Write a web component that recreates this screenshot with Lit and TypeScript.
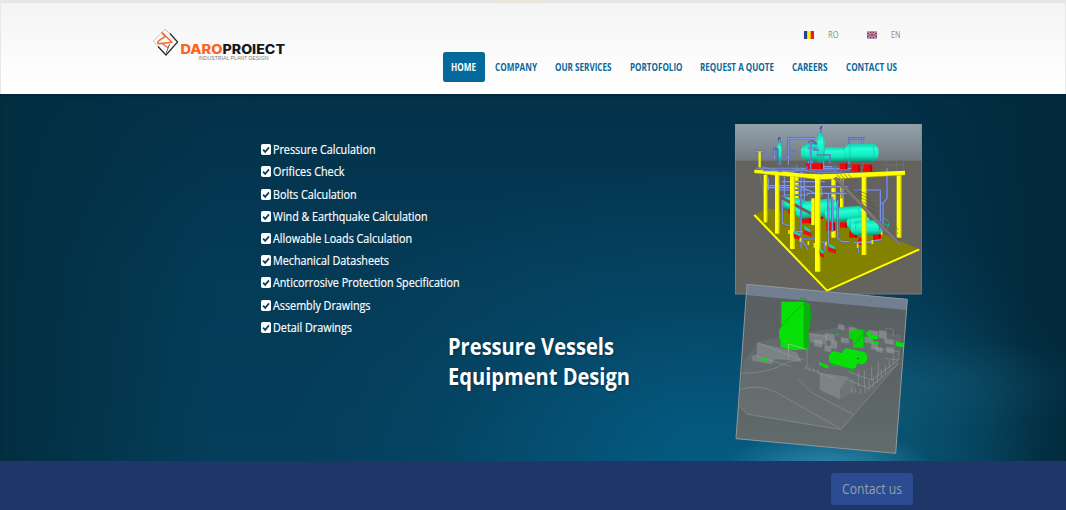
import { LitElement, html, svg, css } from "lit";
import { customElement, property, state } from "lit/decorators.js";
import { styleMap } from "lit/directives/style-map.js";

/** One line of text condensed or expanded horizontally to a given width. */
@customElement("fit-text")
class FitText extends LitElement {
  @property() text = "";
  @property({ type: Number }) width = 0;
  @state() private ratio = 1;

  static styles = css`
    :host { display: block; }
    .box { display: block; overflow: visible; white-space: nowrap; }
    .line { display: inline-block; transform-origin: 0 50%; }
  `;

  firstUpdated() {
    const line = this.renderRoot.querySelector(".line") as HTMLElement;
    if (line.offsetWidth) this.ratio = this.width / line.getBoundingClientRect().width;
  }

  render() {
    return html`<span class="box" style=${styleMap({ width: `${this.width}px` })}
      ><span class="line" style=${styleMap({ transform: `scaleX(${this.ratio})` })}>${this.text}</span></span
    >`;
  }
}

type Pt = [number, number];

const NAV: [string, number, number][] = [
  ["COMPANY", 42, 18], ["OUR SERVICES", 56.5, 18], ["PORTOFOLIO", 52.5, 18],
  ["REQUEST A QUOTE", 74, 18], ["CAREERS", 35.5, 18], ["CONTACT US", 51, 0],
];

const SERVICES: [string, number][] = [
  ["Pressure Calculation", 102.5], ["Orifices Check", 71.5], ["Bolts Calculation", 83.5],
  ["Wind & Earthquake Calculation", 154.5], ["Allowable Loads Calculation", 139],
  ["Mechanical Datasheets", 116], ["Anticorrosive Protection Specification", 186.5],
  ["Assembly Drawings", 97.5], ["Detail Drawings", 79],
];

const PIPES = [
  "M92 110H116L122 126H200M95 160H380M110 165H330M190 150V70H270M250 160V95M262 170V90L290 82",
  "M148 130V95M165 150V70M163 85V66M372 148V70H420M412 70V86",
  "M118 180L128 218H200M130 190V225M130 212H220L270 235M178 185V245M215 215H340M228 185V400M238 190V260",
  "M245 235H365M160 225H250M310 235V390M322 245V350M338 255V370L350 380H372",
  "M172 240V325L215 340M228 372H275L300 385V410M230 375L250 405M388 225H466V345",
  "M486 160V250L474 264V350M474 264H466M400 395V415M385 382H440M205 330V350H232",
  "M115 170H210M205 160L240 178H330M350 190V250M290 245V215H370",
  "M430 380L470 374M296 130V165M268 155H322M190 108H212M100 160L160 176M180 240H250M170 200H300",
];

const PLANT_BOXES: Pt[] = [
  [340, 132], [372, 140], [300, 160], [318, 180], [348, 172], [416, 170], [440, 186],
  [462, 150], [478, 176], [300, 195], [268, 178], [430, 150], [455, 200], [484, 200],
];

@customElement("app-root")
class AppRoot extends LitElement {
  static styles = css`
    :host {
      display: flex; flex-direction: column; width: 1066px; height: 510px; overflow: hidden;
      font-family: "Open Sans", "Noto Sans", sans-serif;
    }
    .header {
      box-sizing: border-box; height: 94px; flex: none; display: flex; justify-content: space-between;
      padding: 0 168.5px 0 150px; background: linear-gradient(#f4f4f4, #ffffff 90%);
      border-top: 3px solid #e7e6e6; border-left: 1px solid #e6e8e9; border-right: 1px solid #e6e8e9;
    }
    .marker { position: absolute; left: 495px; top: 0; width: 51px; height: 2px; background: #efe5d8; }
    .logo { width: 140px; height: 40px; margin-top: 22px; display: block; }
    .side { display: flex; flex-direction: column; align-items: flex-end; }
    .langs { display: flex; align-items: center; height: 14px; margin-top: 25px; font-size: 9px; line-height: 14px; color: #8b8b8b; }
    .flag { width: 10px; height: 8px; display: block; }
    .ro { margin: 0 28px 0 14px; }
    .en { margin: 0 -3.5px 0 14px; }
    .nav { display: flex; align-items: center; margin-top: 10px; height: 30px; font-size: 10.2px; line-height: 14px; font-weight: 700; color: #0b6797; }
    .home { box-sizing: border-box; width: 42px; height: 29.5px; padding: 7.5px 8px; border-radius: 2.5px; background: #046a9c; color: #fff; margin-right: 10px; }
    .hero {
      flex: none; height: 367px; box-sizing: border-box; display: flex; position: relative; padding: 44.5px 0 0 261px; color: #fff;
      background:
        radial-gradient(ellipse 105px 34px at 828px 372px, #3594b8cc, #1b7da600),
        radial-gradient(ellipse 190px 46px at 925px 290px, #1a648048, #0c557000),
        radial-gradient(ellipse 160px 130px at 900px 330px, #0f5c7880, #0c557000),
        radial-gradient(ellipse 300px 170px at 740px 380px, #05699580, #056c9800),
        radial-gradient(ellipse 400px 270px at 690px 340px, #055a80a0 0%, #05507800 100%),
        linear-gradient(90deg, #022e40 0%, #02334600 20%, #02334600 80%, #022a3c 97%),
        linear-gradient(#03314a, #043b57 50%, #043e5b);
      box-shadow: inset 0 2px 2px #02263b;
    }
    .services { list-style: none; margin: 0; padding: 0; width: 187px; flex: none; font-size: 13.5px; -webkit-text-stroke: 0.2px #fff; }
    .service { display: flex; align-items: center; gap: 2.3px; height: 22.22px; line-height: 21px; }
    .check { width: 10px; height: 11px; flex: none; display: block; }
    .title { margin: 193.5px 0 0; width: 277px; flex: none; font-size: 22.8px; line-height: 30px; font-weight: 700; text-shadow: 1px 1px 2px #03263a99; }
    .gallery { width: 205px; height: 345px; margin-top: -23.5px; flex: none; display: block; }
    .footer { flex: 1; box-sizing: border-box; display: flex; justify-content: flex-end; padding: 11.5px 153px 0 0; background: #1e3768; }
    .contact { box-sizing: border-box; width: 82px; height: 32.5px; padding: 6px 11px; border-radius: 3px; background: #2b4c93; color: #959fa9; font-size: 14px; line-height: 20px; }
  `;

  private logo() {
    return html`<svg class="logo" viewBox="0 0 140 40">
      <path d="M7 22L2.5 16L14 4" fill="none" stroke="#c0c0c0" stroke-width=".8" />
      <path d="M14 4L19 9" fill="none" stroke="#b5b5b5" stroke-width=".9" />
      <path d="M19 8.5L26.6 17L15 30L7 21.5" fill="none" stroke="#252a2e" stroke-width="1.2" />
      <path d="M13.2 11L11 7.5L21 17.2L7 18.7Q6 17 8.5 15.2L14.5 11.3" fill="none" stroke="#f4682a" stroke-width="1.4" stroke-linejoin="round" />
      <path d="M11 18.5L17.5 23" stroke="#f4682a" stroke-width="1.2" />
      <path d="M18.5 19L15.2 28" stroke="#555" stroke-width=".9" />
      <g font-family="Inter, sans-serif" font-weight="800" font-size="13.2">
        <text x="29.5" y="29" fill="#fb6420" textLength="42" lengthAdjust="spacingAndGlyphs">DARO</text>
        <text x="71.5" y="29" fill="#15181d" textLength="62.5" lengthAdjust="spacingAndGlyphs">PROIECT</text>
      </g>
      <text x="47.5" y="35.4" fill="#808080" font-family="Liberation Sans, sans-serif" font-size="5.6" textLength="70" lengthAdjust="spacingAndGlyphs">INDUSTRIAL PLANT DESIGN</text>
    </svg>`;
  }

  private column(x: number, top: number, bottom: number, w: number) {
    return svg`<path d="M${x} ${top}h${w}V${bottom}h${-w}z" fill="#ffff00" /><path d="M${x + w - 1.5} ${top}V${bottom}" stroke="#b7b500" stroke-width="2" />`;
  }

  private vessel(x: number, y: number, w: number, h: number, angle = 0) {
    return svg`<g transform="rotate(${angle} ${x} ${y})">
      <rect x=${x} y=${y} width=${w} height=${h} rx=${Math.min(h / 2.2, w / 2, 20)} ry=${Math.min(h / 2.2, 24)} fill="url(#tank)" />
      <path d="M${x + w * 0.18} ${y + 2}q-6 ${h / 2 - 2} 0 ${h - 4}M${x + w * 0.84} ${y + 2}q6 ${h / 2 - 2} 0 ${h - 4}" fill="none" stroke="#10b695" stroke-width="1.5" />
    </g>`;
  }

  private saddle(x: number, y: number, w: number, h: number) {
    return svg`<path d="M${x} ${y}h${w}v${h}h${-w}z" fill="#f50505" /><path d="M${x + w - 4} ${y + 3}v${h - 3}" stroke="#8e0c0c" stroke-width="4" />`;
  }

  private structure() {
    return svg`<g>
      <rect x="30" y="27" width="560" height="511" fill="#65635e" />
      <rect x="30" y="27" width="560" height="110" fill="url(#sky)" />
      <path d="M88 300L310 528L583 403L460 350L240 285L120 283z" fill="#838100" />
      <path d="M122 180H515V350L430 325L300 290L160 290z" fill="#65635e" opacity=".55" />
      <path d="M88 300L306 527L583 403" fill="none" stroke="#ffff00" stroke-width="6" />
      <path d="M105 180L120 255L150 330" fill="none" stroke="#828282" stroke-width="2" />
      ${this.column(210, 185, 260, 11)}${this.column(345, 180, 285, 10)}
      ${this.column(319, 190, 368, 13)}${this.column(515, 175, 368, 14)}
      ${this.saddle(190, 278, 22, 18)}${this.saddle(231, 300, 28, 25)}${this.saddle(275, 292, 20, 20)}
      ${this.vessel(172, 242, 80, 37, 10)}${this.vessel(208, 262, 128, 52, -6)}
      ${this.saddle(304, 320, 28, 27)}${this.saddle(345, 322, 22, 16)}
      ${this.vessel(298, 280, 120, 42, -4)}
      ${this.saddle(372, 348, 25, 20)}${this.saddle(400, 368, 24, 22)}${this.saddle(444, 356, 24, 20)}
      ${this.vessel(364, 306, 70, 38, -3)}${this.vessel(376, 318, 98, 44, -2)}
      <path d="M462 322q14-22 30 0q-3 27-20 25zM466 330h26M476 312v34" fill="none" stroke="#12d7ad" stroke-width="3" stroke-dasharray="4 2" />
      <g fill="none" stroke="#4d5b9c" stroke-width="6" stroke-linejoin="round">${PIPES.map((d) => svg`<path d=${d} />`)}</g>
      <g fill="none" stroke="#8298e4" stroke-width="3.4" stroke-linejoin="round">${PIPES.map((d) => svg`<path d=${d} />`)}</g>
      <path d="M158 242L266 300" stroke="#6e5f5e" stroke-width="9" />
      <g>
        ${this.saddle(242, 145, 52, 18)}${this.saddle(344, 145, 24, 23)}${this.saddle(380, 148, 26, 22)}${this.saddle(414, 148, 28, 22)}
        ${this.vessel(228, 87, 60, 50)}${this.vessel(285, 96, 85, 43)}${this.vessel(358, 86, 103, 53)}
        ${this.vessel(275, 52, 23, 92)}${this.vessel(156, 80, 14, 62)}
        <path d="M257 78V180M264 105H282M275 120H315V145M248 100H275M288 33V54M163 66V83M145 102H158V150M372 86V70H420M250 82Q262 70 275 88" fill="none" stroke="#5368ad" stroke-width="5" />
        <path d="M257 78V180M264 105H282M275 120H315V145M248 100H275M288 33V54M163 66V83M372 86V70H420" fill="none" stroke="#8195dc" stroke-width="2.4" />
        <path d="M285 42l6-9M160 74l4-7" stroke="#30364f" stroke-width="3" />
      </g>
      <path d="M104 110V160" stroke="#f1ef00" stroke-width="7" />
      <path d="M88 164L160 168L238 176L285 178L540 167V180L285 194L235 188L150 181L88 174z" fill="#ffff00" />
      <path d="M88 174L150 181L235 188L285 194L540 180" fill="none" stroke="#a09e00" stroke-width="1.5" />
      <path d="M205 168L288 178L360 174L310 166z" fill="#77773f" />
      <path d="M94 160H230M115 166H245M200 160L275 172H350M215 150V172M245 153V172M110 155L170 170M260 165H375M330 152V174" fill="none" stroke="#506097" stroke-width="5" />
      <path d="M94 160H230M115 166H245M200 160L275 172H350M215 150V172M245 153V172M110 155L170 170M260 165H375M330 152V174" fill="none" stroke="#7c90d6" stroke-width="2.4" />
      ${this.column(116, 179, 322, 11)}${this.column(150, 180, 356, 13)}${this.column(195, 184, 402, 14)}
      ${this.column(259, 250, 330, 11)}${this.column(270, 188, 470, 16)}${this.column(410, 186, 420, 14)}
      <path d="M330 188L524 388" stroke="#7d7775" stroke-width="10" />
      <path d="M326 190L519 390M338 187L527 384" stroke="#55524e" stroke-width="1.5" />
      <path d="M336 178l18 22m-8-22l18 20m-6-20l17 18m-5-18l15 16M505 325l15 20m-15-8l14 20m-14-5l13 16" fill="none" stroke="#77760f" stroke-width="2" />
      <path d="M390 222l45 20m-40-8l45 20m-38-8l42 20m-32-6l40 20m-24 0l30 16" fill="none" stroke="#474540" stroke-width="1.6" />
      <g>
        <path d="M205 355l22 10v10l-20-5zM235 340l25 15v10l-24-8zM283 405l14 13v10l-12-4zM308 388l25 16v12l-24-8z" fill="#ed1010" />
        <path d="M207 346l18 10v8l-20-9zM238 332l18 12v8l-18-8zM285 400l10 9v7l-12-6zM312 386l18 9v8l-20-8z" fill="#14d3aa" />
        <path d="M192 345v12M226 368v12M250 378v12M268 384v14M303 380v12M398 385v13M442 375v12M470 350v10" stroke="#e8e709" stroke-width="5" />
      </g>
      <path d="M415 140V160M515 138V165M480 150H540M535 140V168" stroke="#7a7c7d" stroke-width="1.5" fill="none" />
      <rect x="31" y="28" width="558" height="509" fill="none" stroke="#8f958f" stroke-width="1.5" />
    </g>`;
  }

  private terrain() {
    return svg`<g transform="translate(0 495)">
      <path d="M66 13L547 58L512 520L33 476z" fill="url(#ground)" />
      <path d="M66 13L547 58L545 90L64 45z" fill="#727f90" />
      <path d="M57 240L100 185L175 170L350 140L532 165L520 250L385 405L348 449L68 403L42 377z" fill="#8b9397" opacity=".2" />
      <g fill="none" stroke="#a1aaad" stroke-width="2" opacity=".6">
        <path d="M51 280Q130 280 180 250L240 235M46 328Q100 312 150 335L345 445M42 377L68 403L348 449L520 250M218 295L260 338L386 404" />
        <path d="M98 188L228 240M98 188V230L200 260M190 240V190L246 205V265L330 295M250 160L305 170M480 150q8-12 25 0v20M450 205L522 215V240L480 235" />
      </g>
      <g fill="#9ba2a5" opacity=".42">
        <path d="M98 188L215 216L230 245L150 237L98 220zM80 228L102 221L150 235L140 253L82 242z" />
        <path d="M284 278L370 290V335L345 358L284 330z" /><path d="M372 290L390 300V335L345 358V328z" fill="#798187" />
        <path d="M252 160L305 165V195L255 187z" />
      </g>
      <g stroke="#a3abad" stroke-width="1">${PLANT_BOXES.map(([x, y], i) => svg`<path d="M${x} ${y}l${18 + (i % 3) * 5} 4v${14 + (i % 4) * 3}l${-20 - (i % 3) * 3} -4z" fill="#a6adb0" opacity=".45" />`)}</g>
      <path d="M242 258v13m12-10v14m12-10v12m13-8v14M380 320v18m12-14v16m14-16v18m14-25v22m12-36v30m13-38v28m12-42v28m12-40v26m12-40v26m12-40v24m12-40v26M370 275L440 300L520 240M370 300L430 325L522 250M400 275v45m18-50v50m22-58v40m20-58v40" fill="none" stroke="#a1a9ab" stroke-width="3" opacity=".45" />
      <path d="M169 65H228L252 70L258 100L256 125L250 150V207L205 211L167 202V185L162 170L163 150L169 140z" fill="#06e006" />
      <path d="M236 67L252 70L258 100L256 125L250 150V207L236 208z" fill="#08b30c" />
      <path d="M171 138L205 98L240 70M255 74V128" fill="none" stroke="#0a9a17" stroke-width="1.6" />
      <path d="M220 60h25M225 55h20" stroke="#2a883a" stroke-width="3" stroke-dasharray="3 3" />
      <path d="M190 212V192L245 208" fill="none" stroke="#b1c8b1" stroke-width="2" />
      <path d="M386 147L418 151V204L384 203zM372 155l12-4v28l-12-4z" fill="#08d308" />
      <path d="M390 192L415 160M417 151V204" stroke="#078c0d" stroke-width="1.6" />
      <g fill="#07df09">
        <rect x="356" y="202" width="76" height="38" rx="15" transform="rotate(13 356 202)" />
        <path d="M345 222L402 237" stroke="#07800c" stroke-width="3" />
        <rect x="318" y="211" width="86" height="38" rx="14" transform="rotate(15 318 211)" />
        <path d="M422 158l15-5 5 12 20 0-5 13-25-2zM435 182l27 4-3 8-20-5zM512 182l10 5 15 3v13l-25-6zM282 245l29 12-2 9-27-12zM107 237l10-3 5 5 10-4-6 9-14 0zM328 160l12 3v5z" />
      </g>
      <path d="M325 250V257M378 265V275" fill="none" stroke="#06bd0c" stroke-width="10" />
      <path d="M66 13L547 58L512 520L33 476z" fill="none" stroke="#8f999b" stroke-width="3" />
    </g>`;
  }

  render() {
    return html`
      <header class="header">
        <div class="marker"></div>
        ${this.logo()}
        <div class="side">
          <div class="langs">
            <svg class="flag" viewBox="0 0 10 8"><rect width="3.5" height="8" fill="#24408e" /><rect x="3.3" width="3.7" height="8" fill="#fcee12" /><rect x="6.7" width="3.3" height="8" fill="#dc2020" /></svg>
            <fit-text class="ro" text="RO" .width=${10.5}></fit-text>
            <svg class="flag" viewBox="0 0 10 8"><rect y=".5" width="10" height="7" fill="#37529b" /><path d="M0 .5L10 7.5M10 .5L0 7.5" stroke="#d5d2e2" stroke-width="1.3" /><path d="M0 .5L10 7.5M10 .5L0 7.5" stroke="#c55367" stroke-width=".7" /><path d="M5 .5V7.5M0 4H10" stroke="#ddd" stroke-width="1.9" /><path d="M5 .5V7.5M0 4H10" stroke="#cc3848" stroke-width="1.3" /></svg>
            <fit-text class="en" text="EN" .width=${9.5}></fit-text>
          </div>
          <nav class="nav">
            <div class="home"><fit-text text="HOME" .width=${25}></fit-text></div>
            ${NAV.map(([label, w, gap]) => html`<fit-text style=${styleMap({ marginRight: `${gap}px` })} .text=${label} .width=${w}></fit-text>`)}
          </nav>
        </div>
      </header>
      <main class="hero">
        <ul class="services">
          ${SERVICES.map(([label, w]) => html`<li class="service">
            <svg class="check" viewBox="0 0 10 11"><rect width="10" height="11" rx="1.8" fill="#fff" /><path d="M2.1 5.6L4.2 7.9L8 3.4" fill="none" stroke="#06405c" stroke-width="1.7" /></svg>
            <fit-text .text=${label} .width=${w}></fit-text>
          </li>`)}
        </ul>
        <div class="title">
          <fit-text text="Pressure Vessels" .width=${166}></fit-text>
          <fit-text text="Equipment Design" .width=${182}></fit-text>
        </div>
        <svg class="gallery" viewBox="0 0 615 1035">
          <defs>
            <linearGradient id="sky" x2="0" y2="1"><stop stop-color="#93a3ae" /><stop offset="1" stop-color="#747a7e" /></linearGradient>
            <linearGradient id="tank" x2="0" y2="1"><stop stop-color="#13cfaa" /><stop offset=".3" stop-color="#22ffd7" /><stop offset=".7" stop-color="#13e6bc" /><stop offset="1" stop-color="#079978" /></linearGradient>
            <linearGradient id="ground" x2="0" y2="1"><stop stop-color="#5a5f60" /><stop offset=".6" stop-color="#5c6465" /><stop offset="1" stop-color="#626c6b" /></linearGradient>
          </defs>
          ${this.structure()}${this.terrain()}
        </svg>
      </main>
      <footer class="footer"><div class="contact"><fit-text text="Contact us" .width=${60}></fit-text></div></footer>
    `;
  }
}
